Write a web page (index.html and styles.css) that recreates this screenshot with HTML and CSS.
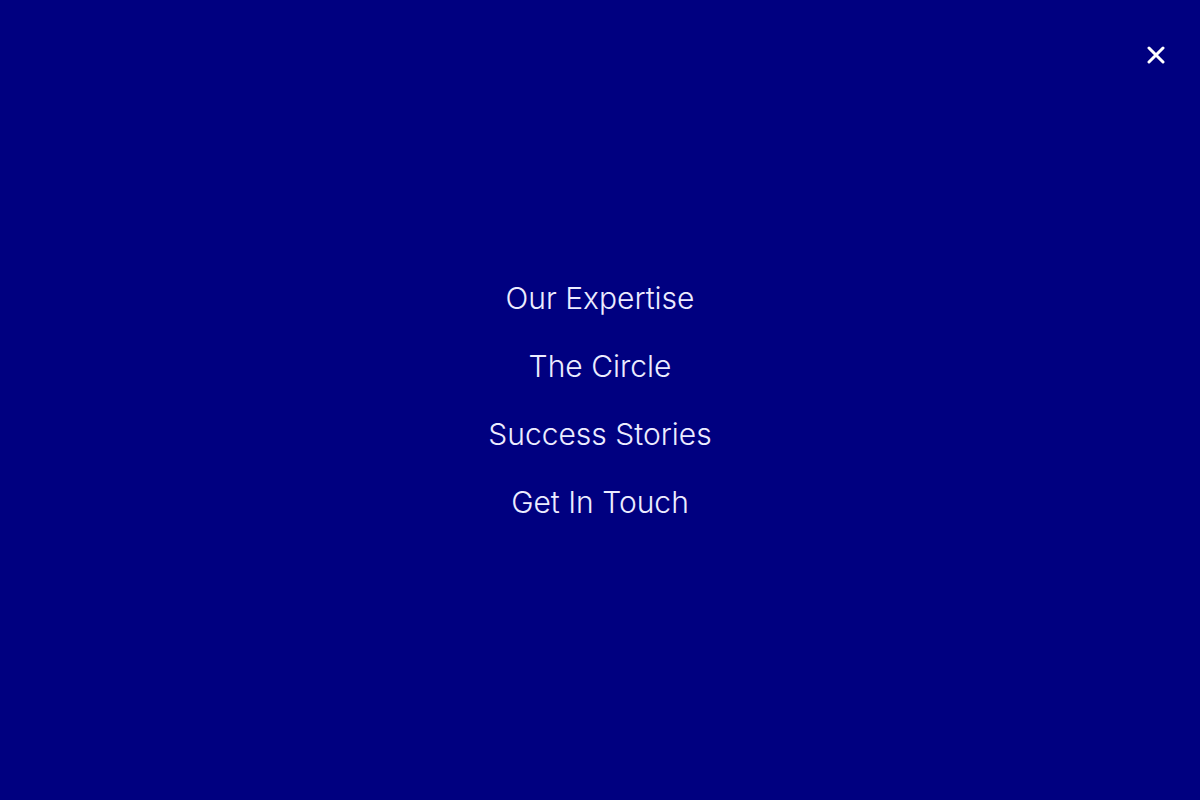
FILE: index.html
```html
<!DOCTYPE html>
<html>
<head>
<meta charset="utf-8">
<link rel="stylesheet" href="styles.css">
</head>
<body>
<div class="overlay">
  <button class="close" aria-label="Close">
    <svg width="18" height="18" viewBox="0 0 18 18"><path d="M2 2L16 16M16 2L2 16" stroke="#fff" stroke-width="3" stroke-linecap="round"/></svg>
  </button>
  <nav class="menu">
    <a class="item" href="#">Our Expertise</a>
    <a class="item" href="#">The Circle</a>
    <a class="item" href="#">Success Stories</a>
    <a class="item" href="#">Get In Touch</a>
  </nav>
</div>
</body>
</html>
```
FILE: styles.css
```css
html, body {
  margin: 0;
  padding: 0;
  height: 100%;
}
body {
  background: #000080;
  font-family: Inter, "Noto Sans", sans-serif;
}
.overlay {
  position: relative;
  height: 100vh;
  display: flex;
  align-items: center;
  justify-content: center;
}
.close {
  position: absolute;
  top: 46px;
  right: 35px;
  background: none;
  border: 0;
  padding: 0;
  width: 18px;
  height: 18px;
  cursor: pointer;
}
.close svg { display: block; }
.menu {
  display: flex;
  flex-direction: column;
  align-items: center;
  gap: 32px;
}
.item {
  color: #ececff;
  text-decoration: none;
  font-size: 30px;
  line-height: 36px;
  font-weight: 300;
}
```
